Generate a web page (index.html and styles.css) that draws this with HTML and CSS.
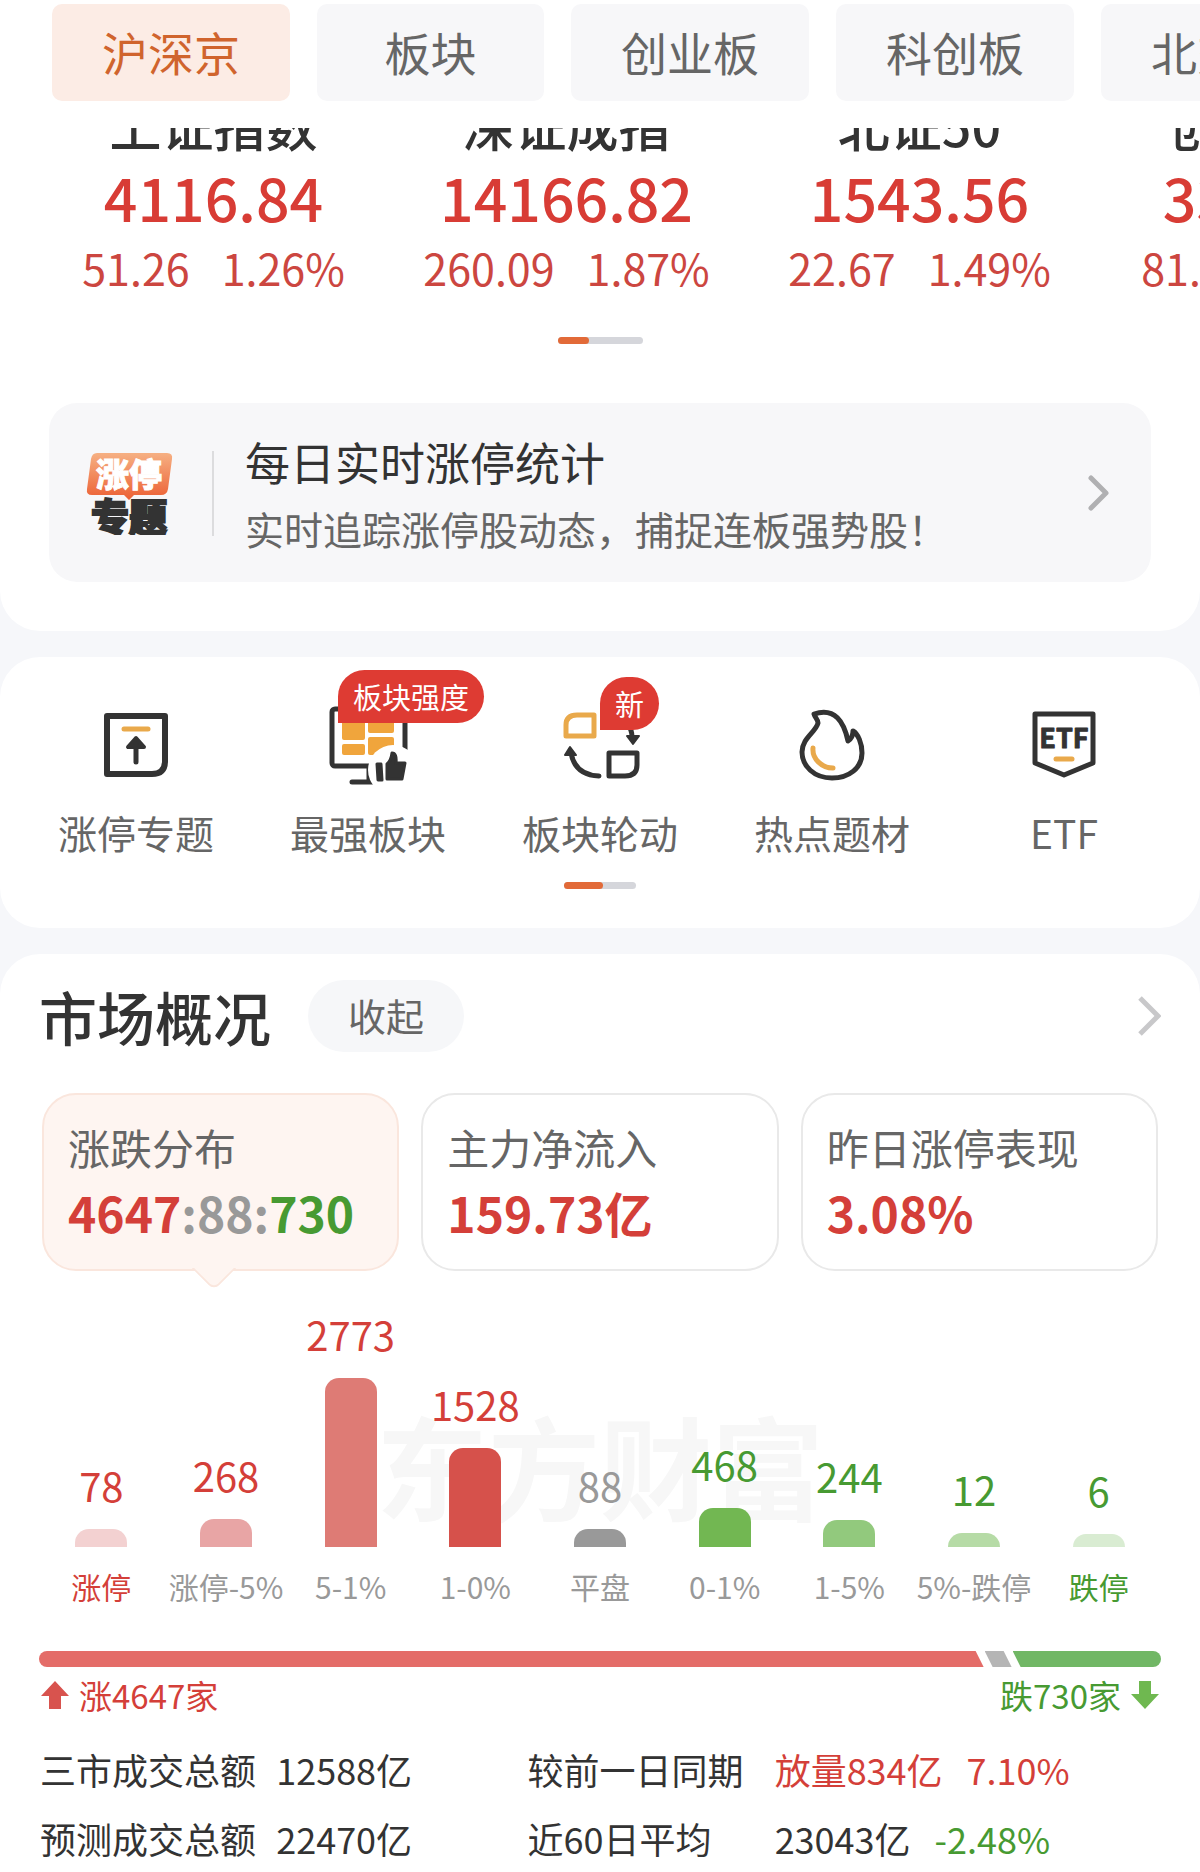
FILE: index.html
```html
<!DOCTYPE html>
<html lang="zh-CN">
<head>
  <meta charset="UTF-8" />
  <meta name="viewport" content="width=device-width, initial-scale=1.0" />
  <title>沪深京</title>
  <link rel="stylesheet" href="styles.css">
</head>
<body>
  <section class="card card-top">
    <nav class="tabs">
      <button type="button" class="tab active">沪深京</button>
      <button type="button" class="tab">板块</button>
      <button type="button" class="tab">创业板</button>
      <button type="button" class="tab">科创板</button>
      <button type="button" class="tab">北交所</button>
    </nav>

    <div class="quotes">
      <div class="quote">
        <div class="quote-name">上证指数</div>
        <div class="quote-price">4116.84</div>
        <div class="quote-change"><span>51.26</span><span>1.26%</span></div>
      </div>
      <div class="quote">
        <div class="quote-name">深证成指</div>
        <div class="quote-price">14166.82</div>
        <div class="quote-change"><span>260.09</span><span>1.87%</span></div>
      </div>
      <div class="quote">
        <div class="quote-name">北证50</div>
        <div class="quote-price">1543.56</div>
        <div class="quote-change"><span>22.67</span><span>1.49%</span></div>
      </div>
      <div class="quote">
        <div class="quote-name">创业板指</div>
        <div class="quote-price">3327.81</div>
        <div class="quote-change"><span>81.02</span><span>2.50%</span></div>
      </div>
    </div>
    <div class="pager pager-quotes"><span></span></div>

    <a href="#" class="banner">
      <svg class="banner-logo" width="88" height="84" viewBox="0 0 88 84">
        <defs>
          <linearGradient id="bubble" x1="0" y1="0" x2="0" y2="1">
            <stop offset="0" stop-color="#f6b083" />
            <stop offset="1" stop-color="#ec6034" />
          </linearGradient>
        </defs>
        <path d="M11 2H81Q87 2 86 8L82 38Q81 44 75 44H48L43 49L38 44H6Q0 44 1 38L5 8Q6 2 11 2Z" fill="url(#bubble)" />
        <text x="43" y="36" class="logo-top">涨停</text>
        <text x="43" y="80" class="logo-bottom">专题</text>
      </svg>
      <div class="banner-text">
        <div class="banner-title">每日实时涨停统计</div>
        <div class="banner-sub">实时追踪涨停股动态，捕捉连板强势股！</div>
      </div>
      <svg class="chevron" width="24" height="40" viewBox="0 0 24 40">
        <path d="M4 5L19 20L4 35" fill="none" stroke="#b0b0b2" stroke-width="5" stroke-linecap="round" stroke-linejoin="round" />
      </svg>
    </a>
  </section>

  <section class="card card-tools">
    <div class="tools">
      <a href="#" class="tool">
        <span class="tool-icon">
          <svg width="80" height="80" viewBox="0 0 80 80" fill="none" stroke-linecap="round" stroke-linejoin="round">
            <path d="M11 11H69V56Q69 69 56 69H11Z" stroke="#333" stroke-width="6" />
            <path d="M28 24H52" stroke="#e9a94b" stroke-width="5" />
            <path d="M40 36V57" stroke="#333" stroke-width="5" />
            <path d="M40 33L32 42H48Z" fill="#333" stroke="#333" stroke-width="4" />
          </svg>
        </span>
        <span class="tool-label">涨停专题</span>
      </a>
      <a href="#" class="tool">
        <span class="tool-icon">
          <svg width="80" height="80" viewBox="0 0 80 80" fill="none" stroke-linecap="round" stroke-linejoin="round">
            <rect x="4" y="4" width="73" height="57" rx="3" stroke="#333" stroke-width="5" />
            <path d="M41 62V76M24 77H50" stroke="#333" stroke-width="5" />
            <g fill="#f0a53c">
              <rect x="14" y="12" width="23" height="23" rx="2" />
              <rect x="40" y="12" width="26" height="16" rx="2" />
              <rect x="14" y="39" width="23" height="11" rx="2" />
              <rect x="40" y="32" width="26" height="18" rx="2" />
            </g>
            <circle cx="65" cy="65" r="25" fill="#fff" />
            <path d="M49 59H53L54 75H50Z" fill="#333" stroke="#333" stroke-width="3" />
            <path d="M59 59Q63 56 64 48Q69 48 68 58H77L74 74H59Z" fill="#333" stroke="#333" stroke-width="3" />
          </svg>
          <span class="badge badge-wide">板块强度</span>
        </span>
        <span class="tool-label">最强板块</span>
      </a>
      <a href="#" class="tool">
        <span class="tool-icon">
          <svg width="80" height="80" viewBox="0 0 80 80" fill="none" stroke-linejoin="round">
            <path d="M17 10H34V31H6V20Q6 10 17 10Z" stroke="#e9a94b" stroke-width="5" />
            <path d="M49 48H77V60Q77 71 65 71H49Z" stroke="#333" stroke-width="5" />
            <path d="M11 48Q15 70 39 71" stroke="#333" stroke-width="5" stroke-linecap="round" />
            <path d="M10 42L16 50H5Z" fill="#333" stroke="#333" stroke-width="2" />
            <path d="M68 20Q72 25 72 32" stroke="#333" stroke-width="5" />
            <path d="M67 31H79L73 39Z" fill="#333" stroke="#333" stroke-width="2" />
          </svg>
          <span class="badge badge-new">新</span>
        </span>
        <span class="tool-label">板块轮动</span>
      </a>
      <a href="#" class="tool">
        <span class="tool-icon">
          <svg width="80" height="80" viewBox="0 0 80 80" fill="none" stroke-linecap="round" stroke-linejoin="round">
            <path d="M22 9C43 2 52 17 56 36C59 34 61 31 61 26C66 29 70 38 70 48C70 63 57 73 40 73C22 73 10 61 10 47C10 33 24 27 26 18C26 14 23 13 22 9Z" stroke="#333" stroke-width="5" />
            <path d="M21 43C20 54 30 63 41 63" stroke="#e9a94b" stroke-width="5" />
          </svg>
        </span>
        <span class="tool-label">热点题材</span>
      </a>
      <a href="#" class="tool">
        <span class="tool-icon">
          <svg width="80" height="80" viewBox="0 0 80 80" fill="none" stroke-linecap="round" stroke-linejoin="round">
            <path d="M11 9H69V58L40 70L11 58Z" stroke="#333" stroke-width="5" />
            <text x="40" y="43" class="etf-text">ETF</text>
            <path d="M32 54H48" stroke="#e9a94b" stroke-width="5" />
          </svg>
        </span>
        <span class="tool-label">ETF</span>
      </a>
    </div>
    <div class="pager pager-tools"><span></span></div>
  </section>

  <section class="card card-market">
    <div class="market-head">
      <h2>市场概况</h2>
      <button type="button" class="fold">收起</button>
      <a href="#" class="more" aria-label="更多">
        <svg width="24" height="42" viewBox="0 0 24 42">
          <path d="M3 3L21 21L3 39" fill="none" stroke="#c8c8ca" stroke-width="5" />
        </svg>
      </a>
    </div>

    <div class="stats">
      <button type="button" class="stat selected">
        <span class="stat-label">涨跌分布</span>
        <span class="stat-value"><span class="up">4647</span><span class="flat">:88:</span><span class="down">730</span></span>
      </button>
      <button type="button" class="stat">
        <span class="stat-label">主力净流入</span>
        <span class="stat-value up">159.73亿</span>
      </button>
      <button type="button" class="stat">
        <span class="stat-label">昨日涨停表现</span>
        <span class="stat-value up">3.08%</span>
      </button>
    </div>

    <div class="chart">
      <div class="watermark">东方财富</div>
      <div class="col up"><span class="num">78</span><i class="bar b1" style="height: 18px"></i><span class="range">涨停</span></div>
      <div class="col up"><span class="num">268</span><i class="bar b2" style="height: 28px"></i><span class="range muted">涨停-5%</span></div>
      <div class="col up"><span class="num">2773</span><i class="bar b3" style="height: 169px"></i><span class="range muted">5-1%</span></div>
      <div class="col up"><span class="num">1528</span><i class="bar b4" style="height: 99px"></i><span class="range muted">1-0%</span></div>
      <div class="col flat"><span class="num">88</span><i class="bar b5" style="height: 18px"></i><span class="range muted">平盘</span></div>
      <div class="col down"><span class="num">468</span><i class="bar b6" style="height: 39px"></i><span class="range muted">0-1%</span></div>
      <div class="col down"><span class="num">244</span><i class="bar b7" style="height: 27px"></i><span class="range muted">1-5%</span></div>
      <div class="col down"><span class="num">12</span><i class="bar b8" style="height: 14px"></i><span class="range muted">5%-跌停</span></div>
      <div class="col down"><span class="num">6</span><i class="bar b9" style="height: 13px"></i><span class="range">跌停</span></div>
    </div>

    <div class="ratio">
      <span class="ratio-up" style="flex-grow: 4647"></span>
      <span class="ratio-flat"></span>
      <span class="ratio-down" style="flex-grow: 730"></span>
    </div>
    <div class="ratio-text">
      <span class="side up">
        <svg width="28" height="28" viewBox="0 0 28 28"><path d="M14 0L28 15H20V28H8V15H0Z" fill="#d8534e" /></svg>
        涨4647家
      </span>
      <span class="side down">
        跌730家
        <svg width="28" height="28" viewBox="0 0 28 28"><path d="M14 28L0 13H8V0H20V13H28Z" fill="#6fb850" /></svg>
      </span>
    </div>

    <div class="facts">
      <span>三市成交总额</span>
      <span>12588亿</span>
      <span>较前一日同期</span>
      <span class="pair up"><span>放量834亿</span><span>7.10%</span></span>
      <span>预测成交总额</span>
      <span>22470亿</span>
      <span>近60日平均</span>
      <span class="pair"><span>23043亿</span><span class="down">-2.48%</span></span>
    </div>
  </section>
</body>
</html>
```
FILE: styles.css
```css
* {
  box-sizing: border-box;
}

body {
  margin: 0;
  background: #f6f7fa;
  color: #333;
  font-family: "Noto Sans CJK SC", "Liberation Sans", sans-serif;
  overflow-x: hidden;
}

a {
  color: inherit;
  text-decoration: none;
}

button {
  border: none;
  font-family: inherit;
  cursor: pointer;
}

.up {
  color: #d43f39;
}

.down {
  color: #479a32;
}

.flat {
  color: #999;
}

.card {
  background: #fff;
  border-radius: 40px;
  margin-bottom: 26px;
  overflow: hidden;
}

/* top: tabs, indexes, banner */
.card-top {
  border-radius: 0 0 40px 40px;
  padding: 4px 0 49px;
}

.tabs {
  display: flex;
  gap: 27px;
  padding-left: 52px;
  overflow: hidden;
}

.tab {
  flex: none;
  min-width: 227px;
  height: 97px;
  padding: 0 50px 4px;
  border-radius: 10px;
  background: #f7f7f9;
  color: #666;
  font-size: 46px;
}

.tab.active {
  background: #fcece5;
  color: #d0642d;
}

.quotes {
  display: grid;
  grid-template-columns: repeat(4, 353px);
  margin-top: 27px;
  padding-left: 37px;
  overflow: hidden;
  text-align: center;
}

.quote-name {
  margin-top: -33px;
  font-size: 52px;
  font-weight: 500;
  line-height: 60px;
}

.quote-price {
  margin-top: 12px;
  color: #d83c35;
  font-size: 59px;
  font-weight: 500;
  line-height: 60px;
}

.quote-change {
  display: flex;
  justify-content: center;
  gap: 32px;
  margin-top: 18px;
  color: #cc4640;
  font-size: 43px;
  line-height: 44px;
}

.pager {
  height: 7px;
  margin: 0 auto;
  border-radius: 4px;
  background: #d5d6db;
}

.pager span {
  display: block;
  height: 7px;
  border-radius: 4px;
  background: #e26a38;
}

.pager-quotes {
  width: 85px;
  margin-top: 48px;
}

.pager-quotes span {
  width: 31px;
}

.banner {
  display: flex;
  align-items: center;
  height: 179px;
  margin: 59px 49px 0;
  padding: 0 40px 0 37px;
  border-radius: 28px;
  background: #f7f7f9;
}

.banner-logo {
  flex: none;
}

.banner-text {
  position: relative;
  flex: 1;
  margin-left: 71px;
  white-space: nowrap;
}

/* thin divider between the logo and the text */
.banner-text::before {
  content: "";
  position: absolute;
  left: -33px;
  top: 17px;
  bottom: 16px;
  width: 2px;
  background: #dcdcde;
}

.banner-title {
  font-size: 45px;
  line-height: 56px;
}

.banner-sub {
  margin-top: 14px;
  color: #666;
  font-size: 39px;
  line-height: 48px;
}

.logo-top,
.logo-bottom {
  font-weight: 900;
  text-anchor: middle;
}

.logo-top {
  fill: #fff;
  stroke: #fff;
  stroke-width: 1;
  font-size: 33px;
}

.logo-bottom {
  fill: #333;
  font-size: 38px;
  font-style: oblique 6deg;
  stroke: #333;
  stroke-width: 2;
}

/* shortcuts */
.card-tools {
  padding: 48px 20px 39px;
}

.tools {
  display: grid;
  grid-template-columns: repeat(5, 1fr);
}

.tool {
  display: flex;
  flex-direction: column;
  align-items: center;
}

.tool-icon {
  position: relative;
  width: 80px;
  height: 80px;
}

.tool-icon svg {
  display: block;
}

.tool-label {
  margin-top: 23px;
  color: #666;
  font-size: 39px;
  line-height: 48px;
}

.etf-text {
  fill: #333;
  stroke: #333;
  stroke-width: 1;
  font-size: 27px;
  font-weight: 700;
  text-anchor: middle;
}

.badge {
  position: absolute;
  height: 53px;
  border-radius: 27px 27px 27px 0;
  background: #de3b33;
  color: #fff;
  font-size: 29px;
  line-height: 52px;
  text-align: center;
  white-space: nowrap;
}

.badge-wide {
  left: 10px;
  top: -35px;
  width: 146px;
}

.badge-new {
  left: 40px;
  top: -28px;
  width: 59px;
}

.pager-tools {
  width: 72px;
  margin-top: 26px;
}

.pager-tools span {
  width: 39px;
}

/* market overview */
.card-market {
  margin-bottom: 0;
  padding: 26px 39px 11px;
  border-radius: 40px 40px 0 0;
}

.market-head {
  display: flex;
  align-items: center;
}

.market-head h2 {
  margin: 0;
  font-size: 58px;
  font-weight: 500;
  line-height: 72px;
}

.fold {
  width: 156px;
  height: 72px;
  margin-left: 37px;
  padding: 0 0 3px;
  border-radius: 36px;
  background: #f6f7f9;
  color: #666;
  font-size: 38px;
}

.more {
  margin-left: auto;
}

.more svg {
  display: block;
}

.stats {
  display: grid;
  grid-template-columns: repeat(3, 1fr);
  gap: 22px;
  margin-top: 41px;
  padding: 0 3px;
}

.stat {
  position: relative;
  padding: 24px 24px 29px;
  border: 2px solid #e9e9e9;
  border-radius: 34px;
  background: #fff;
  text-align: left;
}

.stat.selected {
  border-color: #fae6dd;
  background: #fef5f1;
}

/* small pointer towards the chart */
.stat.selected::after {
  content: "";
  position: absolute;
  left: 154px;
  bottom: -15px;
  width: 30px;
  height: 30px;
  border: solid #fae6dd;
  border-width: 0 2px 2px 0;
  border-radius: 0 0 8px 0;
  background: #fef5f1;
  transform: rotate(45deg);
  clip-path: polygon(100% 0, 100% 100%, 0 100%);
}

.stat-label {
  display: block;
  color: #666;
  font-size: 42px;
  line-height: 56px;
}

.stat-value {
  display: block;
  margin-top: 9px;
  font-size: 48px;
  font-weight: 700;
  line-height: 56px;
}

.chart {
  position: relative;
  display: grid;
  grid-template-columns: repeat(9, 1fr);
  align-items: end;
  margin-top: 39px;
}

.watermark {
  position: absolute;
  left: 0;
  right: 0;
  top: 98px;
  color: #f7f7f7;
  font-size: 112px;
  font-weight: 700;
  line-height: 112px;
  text-align: center;
}

.col {
  position: relative;
  display: flex;
  flex-direction: column;
  align-items: center;
}

.num {
  font-size: 40px;
  line-height: 48px;
}

.bar {
  width: 52px;
  margin-top: 20px;
  border-radius: 14px 14px 0 0;
}

.b1 { background: #f3d1d1; }
.b2 { background: #e8a5a5; }
.b3 { background: #de7b75; }
.b4 { background: #d6514b; }
.b5 { background: #999; }
.b6 { background: #72b752; }
.b7 { background: #92c97d; }
.b8 { background: #b6dba6; }
.b9 { background: #d9ecd2; }

.range {
  margin-top: 19px;
  font-size: 30px;
  line-height: 40px;
  white-space: nowrap;
}

.muted {
  color: #999;
}

.ratio {
  display: flex;
  gap: 1px;
  height: 16px;
  margin-top: 45px;
  border-radius: 8px;
  overflow: hidden;
}

.ratio-up {
  background: #e46c68;
  clip-path: polygon(0 0, calc(100% - 8px) 0, 100% 100%, 0 100%);
}

.ratio-flat {
  width: 27px;
  background: #b5b5b5;
  clip-path: polygon(0 0, 19px 0, 100% 100%, 8px 100%);
}

.ratio-down {
  background: #71b765;
  clip-path: polygon(0 0, 100% 0, 100% 100%, 8px 100%);
}

.ratio-text {
  display: flex;
  justify-content: space-between;
  margin-top: 8px;
  padding: 0 2px;
  font-size: 33px;
  line-height: 40px;
}

.side {
  display: flex;
  align-items: center;
  gap: 10px;
}

.facts {
  display: grid;
  grid-template-columns: 236fr 251fr 247fr 386fr;
  row-gap: 21px;
  margin-top: 30px;
  padding-left: 1px;
  font-size: 36px;
  line-height: 48px;
  white-space: nowrap;
}

.pair {
  display: flex;
  gap: 24px;
}
```
